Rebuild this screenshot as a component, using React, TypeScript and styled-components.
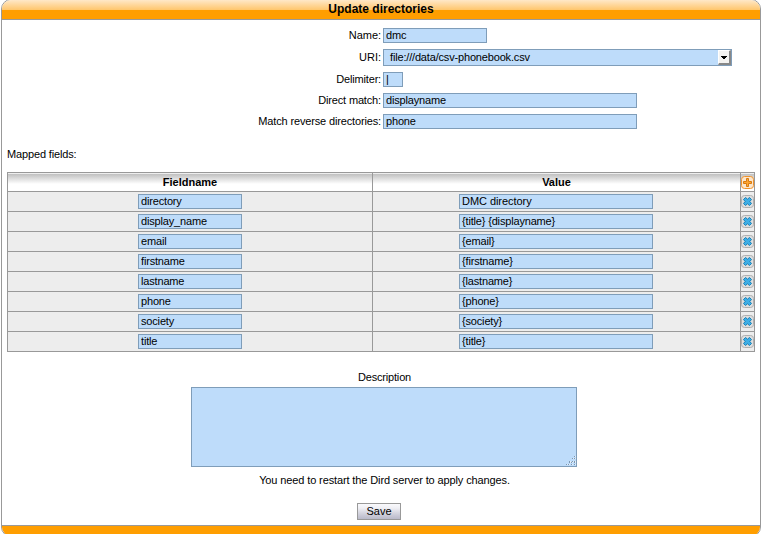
import React from "react";
import styled, { createGlobalStyle } from "styled-components";

const GlobalStyle = createGlobalStyle`
  * { box-sizing: border-box; }
  body {
    margin: 0;
    background: #fff;
    color: #000;
    font: 11px/13px "Liberation Sans", Arial, sans-serif;
    letter-spacing: -0.15px;
    overflow: hidden;
  }
  #root {
    height: 534px;
    overflow: hidden;
  }
`;

const Panel = styled.main`
  width: 760px;
  height: 538px;
  margin: -1px 0 0 1px;
  display: flex;
  flex-direction: column;
  border: 1px solid #999;
  border-radius: 10px;
  overflow: hidden;
`;

const Title = styled.h1`
  margin: 0;
  height: 20px;
  flex: none;
  border-bottom: 1px solid #999;
  background: linear-gradient(#ffe8c8 0, #ffc66c 10px, #ff9e00 10px);
  font-size: 12px;
  line-height: 18px;
  font-weight: bold;
  letter-spacing: 0;
  text-align: center;
`;

const Footer = styled.footer`
  height: 11px;
  flex: none;
  border-top: 1px solid #999;
  background: #ff9e00;
`;

const Content = styled.form`
  flex: 1;
  min-height: 0;
  padding: 8px 5px 0;
  display: flex;
  flex-direction: column;
`;

const Fields = styled.div`
  display: flex;
  flex-direction: column;
  gap: 6px;
`;

const FieldRow = styled.label`
  display: grid;
  grid-template-columns: 374px auto;
  column-gap: 2px;
  align-items: center;
  justify-content: start;
`;

const Label = styled.span<{ $spacing?: number }>`
  text-align: right;
  letter-spacing: ${(p) => p.$spacing ?? -0.15}px;
`;

const Input = styled.input<{ $width: number; $spacing?: number }>`
  display: block;
  width: ${(p) => p.$width}px;
  height: 15px;
  margin: 0;
  padding: 0 2px 1px;
  border: 1px solid #7f9db9;
  border-radius: 0;
  outline: none;
  background: #bedcfa;
  color: #000;
  font: inherit;
  line-height: 12px;
  letter-spacing: ${(p) => p.$spacing ?? -0.17}px;
`;

const SelectBox = styled.span`
  display: flex;
  justify-content: space-between;
  width: 349px;
  height: 17px;
  padding-left: 6px;
  border: 1px solid #7f9db9;
  background: #bedcfa;
  line-height: 15px;
  letter-spacing: -0.17px;
`;

const SelectArrow = styled.span`
  display: flex;
  align-items: center;
  justify-content: center;
  width: 13px;
  height: 15px;
  padding-top: 1px;
  background: #f4f3f1;
  border: solid;
  border-width: 1px 2px 2px 1px;
  border-color: #fff #888 #888 #fff;
`;

const SectionLabel = styled.p`
  margin: 19px 0 0;
`;

const Grid = styled.div`
  display: grid;
  grid-template-columns: 365px 368px 14px;
  grid-template-rows: 19px;
  grid-auto-rows: 20px;
  width: 748px;
  margin-top: 11px;
  border: solid #999;
  border-width: 1px 0 0 1px;
`;

const Cell = styled.div<{ $head?: boolean }>`
  display: flex;
  align-items: center;
  justify-content: center;
  border: solid #999;
  border-width: 0 1px 1px 0;
  font-weight: ${(p) => (p.$head ? "bold" : "normal")};
  letter-spacing: 0;
  background: ${(p) =>
    p.$head ? "linear-gradient(#eee 0, #eee 1px, #c0c0c0 1px, #fff 11px)" : "#ededed"};
`;

const ValueCell = styled(Cell)`
  justify-content: flex-start;
  padding-left: 86px;
`;

const IconButton = styled.button`
  display: flex;
  padding: 0;
  border: 0;
  background: none;
`;

const Description = styled.label`
  display: flex;
  flex-direction: column;
  align-items: center;
  gap: 3px;
  margin: 19px 0 0 6px;
`;

const DescriptionLabel = styled.span`
  padding-left: 1px;
  letter-spacing: -0.18px;
`;

const Area = styled.div`
  display: flex;
  align-items: flex-end;
  width: 386px;
  height: 80px;
  border: 1px solid #7f9db9;
  background: #bedcfa;
`;

const TextArea = styled.textarea`
  flex: 1;
  height: 100%;
  padding: 2px;
  border: 0;
  outline: none;
  resize: none;
  background: transparent;
  font: inherit;
`;

const Notice = styled.p`
  margin: 7px 0 16px 7px;
  text-align: center;
  letter-spacing: -0.12px;
`;

const SaveButton = styled.button`
  align-self: center;
  width: 44px;
  height: 17px;
  margin-right: 4px;
  padding: 0;
  border: 1px solid #999;
  background: linear-gradient(#fafafc 0, #f0f0f5 4px, #d5d5df 9px, #b9b9c9 15px);
  color: #000;
  font: inherit;
`;

const AddIcon = () => (
  <svg width="13" height="13" viewBox="0 0 13 13">
    <rect x="0.5" y="0.5" width="12" height="12" rx="3" fill="#fbe6cc" stroke="#f0932c" />
    <path d="M5.5 2.5h2v3h3v2h-3v3h-2v-3h-3v-2h3z" fill="#ffa630" stroke="#d87a10" />
  </svg>
);

const RemoveIcon = () => (
  <svg width="13" height="13" viewBox="0 0 13 13">
    <rect x="0.5" y="0.5" width="12" height="12" rx="3" fill="#dedede" stroke="#b0b0b0" />
    <path
      d="M4.5 2.5L6.5 4.2L8.5 2.5L10.5 4.5L8.8 6.5L10.5 8.5L8.5 10.5L6.5 8.8L4.5 10.5L2.5 8.5L4.2 6.5L2.5 4.5Z"
      fill="#3daee6"
      stroke="#1a80b4"
    />
  </svg>
);

const ArrowIcon = () => (
  <svg width="6" height="3" viewBox="0 0 6 3" shapeRendering="crispEdges">
    <path d="M0 0h6v1h-1v1h-1v1h-2v-1h-1v-1h-1z" />
  </svg>
);

const GRIP = [[8, 0], [6, 2], [8, 2], [3, 5], [6, 5], [8, 5], [3, 6], [5, 6], [8, 6], [0, 8], [2, 8], [5, 8], [8, 8]];

const Grip = () => (
  <svg width="10" height="10" viewBox="0 0 10 10" shapeRendering="crispEdges">
    {GRIP.map(([x, y]) => (
      <g key={`${x}-${y}`}>
        <rect x={x + 1} y={y} width="1" height="1" fill="#e6eef5" />
        <rect x={x} y={y} width="1" height="1" fill="#7b97b3" />
      </g>
    ))}
  </svg>
);

const MAPPED: { name: string; value: string; spacing?: number }[] = [
  { name: "directory", value: "DMC directory", spacing: -0.05 },
  { name: "display_name", value: "{title} {displayname}" },
  { name: "email", value: "{email}" },
  { name: "firstname", value: "{firstname}" },
  { name: "lastname", value: "{lastname}" },
  { name: "phone", value: "{phone}" },
  { name: "society", value: "{society}" },
  { name: "title", value: "{title}" },
];

interface TextFieldProps {
  label: string;
  value: string;
  width: number;
  spacing?: number;
}

const TextField = ({ label, value, width, spacing }: TextFieldProps) => (
  <FieldRow>
    <Label $spacing={spacing}>{label}</Label>
    <Input $width={width} defaultValue={value} />
  </FieldRow>
);

export default function App() {
  return (
    <>
      <GlobalStyle />
      <Panel>
        <Title>Update directories</Title>
        <Content onSubmit={(e) => e.preventDefault()}>
          <Fields>
            <TextField label="Name:" value="dmc" width={104} spacing={-0.05} />
            <FieldRow>
              <Label $spacing={0}>URI:</Label>
              <SelectBox>
                file:///data/csv-phonebook.csv
                <SelectArrow>
                  <ArrowIcon />
                </SelectArrow>
              </SelectBox>
            </FieldRow>
            <TextField label="Delimiter:" value="|" width={20} spacing={-0.18} />
            <TextField label="Direct match:" value="displayname" width={254} />
            <TextField label="Match reverse directories:" value="phone" width={254} />
          </Fields>
          <SectionLabel>Mapped fields:</SectionLabel>
          <Grid>
            <Cell $head>Fieldname</Cell>
            <Cell $head>Value</Cell>
            <Cell $head>
              <IconButton type="button" aria-label="Add">
                <AddIcon />
              </IconButton>
            </Cell>
            {MAPPED.map(({ name, value, spacing }) => (
              <React.Fragment key={name}>
                <Cell>
                  <Input $width={104} defaultValue={name} />
                </Cell>
                <ValueCell>
                  <Input $width={194} $spacing={spacing} defaultValue={value} />
                </ValueCell>
                <Cell>
                  <IconButton type="button" aria-label="Remove">
                    <RemoveIcon />
                  </IconButton>
                </Cell>
              </React.Fragment>
            ))}
          </Grid>
          <Description>
            <DescriptionLabel>Description</DescriptionLabel>
            <Area>
              <TextArea />
              <Grip />
            </Area>
          </Description>
          <Notice>You need to restart the Dird server to apply changes.</Notice>
          <SaveButton type="submit">Save</SaveButton>
        </Content>
        <Footer />
      </Panel>
    </>
  );
}
